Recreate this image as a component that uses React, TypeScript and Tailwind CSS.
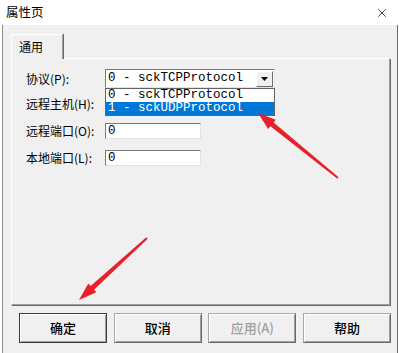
import { X } from "lucide-react";

const ui = { fontFamily: '"Noto Sans CJK SC", "Noto Sans", sans-serif' };
const mono = { fontFamily: '"Liberation Mono", "Noto Sans CJK SC", monospace' };

const Field = ({ value }: { value: string }) => (
  <div
    className="h-[16px] w-[96px] bg-white border border-t-[#7a7a7a] border-l-[#7a7a7a] border-r-[#e3e3e3] border-b-[#e3e3e3] flex items-center pl-[2px] text-[12.5px] leading-none text-black"
    style={mono}
  >
    {value}
  </div>
);

const Row = ({ label, children, className }: { label: string; children?: React.ReactNode; className?: string }) => (
  <div className={`flex items-center ${className ?? ""}`}>
    <span className="w-[79px] text-[12px] leading-none text-black" style={ui}>
      {label}
    </span>
    {children}
  </div>
);

const Button = ({ label, primary, disabled }: { label: string; primary?: boolean; disabled?: boolean }) => (
  <div
    className={`h-[30px] w-[88px] flex items-center justify-center bg-[#f0f0f0] text-[13px] font-medium ${
      primary
        ? "border border-[#3c3c3c] shadow-[inset_1px_1px_0_#ffffff,inset_-1px_-1px_0_#a0a0a0]"
        : "border border-t-[#a8a8a8] border-l-[#a8a8a8] border-r-[#696969] border-b-[#696969] shadow-[inset_1px_1px_0_#ffffff,inset_-1px_-1px_0_#a0a0a0]"
    } ${disabled ? "text-[#a0a0a0]" : "text-black"}`}
    style={ui}
  >
    {label}
  </div>
);

export default function App() {
  return (
    <div className="relative w-[399px] h-[353px] overflow-hidden bg-white flex flex-col">
      {/* title bar */}
      <div className="h-[25px] shrink-0 bg-white flex items-center justify-between pl-[6px] pr-[10px]">
        <span className="text-[12.5px] text-black" style={ui}>
          属性页
        </span>
        <X size={14} strokeWidth={1.2} className="text-black" />
      </div>

      <div className="flex flex-1">
        <div className="w-[3px] bg-white border-r border-[#8a8a8a]" />
        <div className="flex-1 bg-[#f0f0f0] flex flex-col pl-[8px] pt-[9px]">
          {/* tab */}
          <div className="relative z-10 -mb-px w-[52px] h-[25px] bg-[#f0f0f0] border-t border-l border-white border-r border-r-[#a0a0a0] shadow-[1px_0_0_#696969] flex items-center pl-[7px] pb-[1px]">
            <span className="text-[12px] text-black" style={ui}>
              通用
            </span>
          </div>
          {/* panel */}
          <div className="relative w-[379px] h-[247px] border-t border-l border-white border-r border-b border-r-[#a0a0a0] border-b-[#a0a0a0] shadow-[1px_1px_0_#696969] pl-[14px] pt-[10px] flex flex-col">
            <Row label="协议(P):">
              <div className="relative h-[19px] w-[170px] bg-white border border-t-[#7a7a7a] border-l-[#7a7a7a] border-r-[#e3e3e3] border-b-[#e3e3e3] flex items-center">
                <span className="pl-[2px] text-[12.5px] leading-none text-black flex-1" style={mono}>
                  0 - sckTCPProtocol
                </span>
                <div className="mr-px h-[16px] w-[17px] bg-[#f0f0f0] border border-t-white border-l-white border-r-[#696969] border-b-[#696969] flex items-center justify-center">
                  <svg width="7" height="4" viewBox="0 0 7 4">
                    <polygon points="0,0 7,0 3.5,4" fill="#000" />
                  </svg>
                </div>
                {/* open list */}
                <div className="absolute left-[-1px] top-[18px] z-20 w-[170px] h-[28px] bg-white border border-[#646464] flex flex-col">
                  <div className="h-[13px] flex items-center pl-[2px] text-[12.5px] leading-[13px] text-black" style={mono}>
                    0 - sckTCPProtocol
                  </div>
                  <div className="h-[13px] flex items-center pl-[2px] bg-[#0078d7] text-[12.5px] leading-[13px] text-white" style={mono}>
                    1 - sckUDPProtocol
                  </div>
                </div>
              </div>
            </Row>
            <Row label="远程主机(H):" className="mt-[8px]">
              <div className="h-[16px] w-[170px] bg-white" />
            </Row>
            <Row label="远程端口(O):" className="mt-[11px]">
              <Field value="0" />
            </Row>
            <Row label="本地端口(L):" className="mt-[11px]">
              <Field value="0" />
            </Row>
          </div>
          {/* buttons */}
          <div className="mt-[8px] ml-[8px] w-[372px] flex justify-between">
            <Button label="确定" primary />
            <Button label="取消" />
            <Button label="应用(A)" disabled />
            <Button label="帮助" />
          </div>
        </div>
        <div className="w-[1px] bg-[#f0f0f0]" />
        <div className="w-[1px] bg-[#6a6a6a]" />
        <div className="w-[1px] bg-white" />
      </div>

      {/* annotation arrows */}
      <svg className="absolute inset-0 pointer-events-none z-30" width="399" height="353" viewBox="0 0 399 353">
        <polygon
          points="338.6,177.2 273.6,122.5 275.8,119.7 258,113 268.2,129.1 270.4,126.3 337.4,178.8"
          fill="#e8202a"
        />
        <polygon
          points="147.7,238.7 94,289.7 96.3,292.3 79,300 88.3,283.5 90.6,286.1 146.3,237.3"
          fill="#e8202a"
        />
      </svg>
    </div>
  );
}
